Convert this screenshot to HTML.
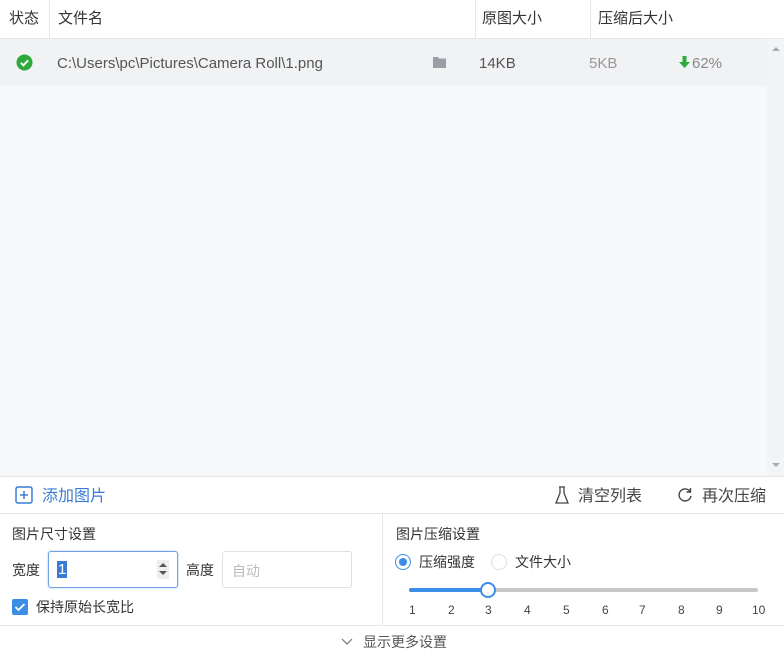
<!DOCTYPE html>
<html><head><meta charset="utf-8"><style>
*{box-sizing:border-box;margin:0;padding:0}
body{width:784px;height:661px;overflow:hidden;background:#fff;font-family:"Liberation Sans","Noto Sans CJK SC",sans-serif;color:#333;position:relative;font-size:14px}
.abs{position:absolute}
.hdr{left:0;top:0;width:784px;height:39px;background:#fff;border-bottom:1px solid #e6e8eb}
.hdr div{position:absolute;top:0;height:38px;line-height:38px;font-size:15px;color:#333;border-right:1px solid #e6e8eb;padding-left:8px}
.list{left:0;top:39px;width:767px;height:437px;background:#f7f8fa}
.row{left:0;top:39px;width:767px;height:47px;background:#f1f2f4}
.sb{left:767px;top:39px;width:17px;height:437px;background:#f3f4f6}
.tb{left:0;top:476px;width:784px;height:38px;background:#fff;border-top:1px solid #e6e8eb;border-bottom:1px solid #e6e8eb}
.blue{color:#3a7bd5}
.input{border:1px solid #dcdfe6;border-radius:3px;background:#fff}
</style></head><body>
<div class="abs hdr">
<div style="left:0;width:50px;padding-left:9px">状态</div>
<div style="left:50px;width:426px">文件名</div>
<div style="left:476px;width:115px;padding-left:6px">原图大小</div>
<div style="left:591px;width:193px;border-right:none;padding-left:7px">压缩后大小</div>
</div>
<div class="abs list"></div>
<div class="abs row"></div>
<div class="abs sb"><div style="position:absolute;left:5px;top:8px;width:0;height:0;border-left:4px solid transparent;border-right:4px solid transparent;border-bottom:4px solid #aaa"></div><div style="position:absolute;left:5px;top:424px;width:0;height:0;border-left:4px solid transparent;border-right:4px solid transparent;border-top:4px solid #aaa"></div></div>
<svg class="abs" style="left:16px;top:54px" width="17" height="17" viewBox="0 0 17 17"><circle cx="8.5" cy="8.5" r="8" fill="#2eaa3c"/><path d="M4.8 8.8l2.6 2.5 4.8-5" stroke="#fff" stroke-width="2" fill="none"/></svg>
<div class="abs" style="left:57px;top:55px;font-size:15px;color:#555">C:\Users\pc\Pictures\Camera Roll\1.png</div>
<svg class="abs" style="left:433px;top:56px" width="13" height="12" viewBox="0 0 13 12"><path d="M0 1h5l1 1.5h7V12H0z" fill="#9a9ea6"/></svg>
<div class="abs" style="left:479px;top:55px;font-size:15px;color:#555">14KB</div>
<div class="abs" style="left:589px;top:55px;font-size:15px;color:#999">5KB</div>
<svg class="abs" style="left:679px;top:56px" width="11" height="12" viewBox="0 0 11 12"><path d="M3.5 0h4v6h3.5L5.5 12 0 6h3.5z" fill="#2eaa3c"/></svg>
<div class="abs" style="left:692px;top:55px;font-size:15px;color:#888">62%</div>
<div class="abs tb"></div>
<svg class="abs" style="left:15px;top:486px" width="18" height="18" viewBox="0 0 18 18"><rect x="1" y="1" width="16" height="16" rx="2" fill="none" stroke="#3a7bd5" stroke-width="1.5"/><path d="M9 5v8M5 9h8" stroke="#3a7bd5" stroke-width="1.5"/></svg>
<div class="abs blue" style="left:42px;top:482px;font-size:16px">添加图片</div>
<svg class="abs" style="left:555px;top:486px" width="14" height="18" viewBox="0 0 14 18"><path d="M4 1h6M5 1v6L1 17h12L9 7V1" fill="none" stroke="#444" stroke-width="1.3"/></svg>
<div class="abs" style="left:578px;top:482px;font-size:16px;color:#444">清空列表</div>
<svg class="abs" style="left:677px;top:487px" width="16" height="16" viewBox="0 0 16 16"><path d="M13 4.5A6 6 0 1 0 14 9" fill="none" stroke="#444" stroke-width="1.4"/><path d="M13.5 1v4h-4" fill="none" stroke="#444" stroke-width="1.4"/></svg>
<div class="abs" style="left:702px;top:482px;font-size:16px;color:#444">再次压缩</div>
<div class="abs" style="left:382px;top:514px;width:1px;height:111px;background:#e6e8eb"></div>
<div class="abs" style="left:0;top:625px;width:784px;height:1px;background:#e6e8eb"></div>
<div class="abs" style="left:12px;top:524px;font-size:14px">图片尺寸设置</div>
<div class="abs" style="left:12px;top:560px;font-size:14px">宽度</div>
<div class="abs input" style="left:48px;top:551px;width:130px;height:37px;border-color:#6fa3e6;box-shadow:0 0 2px #a9c8f0"><span style="position:absolute;left:8px;top:9px;background:#3a7bd5;color:#fff;font-size:15px;line-height:17px;padding:0 1px">1</span><div style="position:absolute;right:8px;top:8px;width:12px;height:19px;background:#eee"><div style="position:absolute;left:2px;top:3px;border-left:4px solid transparent;border-right:4px solid transparent;border-bottom:4px solid #555"></div><div style="position:absolute;left:2px;top:11px;border-left:4px solid transparent;border-right:4px solid transparent;border-top:4px solid #555"></div></div></div>
<div class="abs" style="left:186px;top:560px;font-size:14px">高度</div>
<div class="abs input" style="left:222px;top:551px;width:130px;height:37px"><span style="position:absolute;left:9px;top:9px;color:#bbb;font-size:14px">自动</span></div>
<div class="abs" style="left:12px;top:599px;width:16px;height:16px;background:#3a8ee6;border-radius:2px"><svg width="16" height="16"><path d="M3.5 8l3 3 6-6" stroke="#fff" stroke-width="1.8" fill="none"/></svg></div>
<div class="abs" style="left:36px;top:597px;font-size:14px">保持原始长宽比</div>
<div class="abs" style="left:396px;top:524px;font-size:14px">图片压缩设置</div>
<div class="abs" style="left:395px;top:554px;width:16px;height:16px;border-radius:50%;border:1px solid #3a8ee6;background:#fff"><div style="position:absolute;left:3px;top:3px;width:8px;height:8px;border-radius:50%;background:#3a8ee6"></div></div>
<div class="abs" style="left:419px;top:552px;font-size:14px">压缩强度</div>
<div class="abs" style="left:491px;top:554px;width:16px;height:16px;border-radius:50%;border:1px solid #dcdfe6"></div>
<div class="abs" style="left:515px;top:552px;font-size:14px">文件大小</div>
<div class="abs" style="left:409px;top:588px;width:349px;height:4px;background:#c8c8c8;border-radius:2px"></div>
<div class="abs" style="left:409px;top:588px;width:80px;height:4px;background:#3a8ee6;border-radius:2px"></div>
<div class="abs" style="left:480px;top:582px;width:16px;height:16px;border-radius:50%;border:2px solid #3a8ee6;background:#fff"></div>
<div class="abs" style="left:409px;top:603px;width:360px;font-size:12px;color:#444">
<span style="position:absolute;left:0">1</span><span style="position:absolute;left:39px">2</span><span style="position:absolute;left:76px">3</span><span style="position:absolute;left:115px">4</span><span style="position:absolute;left:154px">5</span><span style="position:absolute;left:193px">6</span><span style="position:absolute;left:230px">7</span><span style="position:absolute;left:269px">8</span><span style="position:absolute;left:307px">9</span><span style="position:absolute;left:343px">10</span></div>
<svg class="abs" style="left:341px;top:638px" width="12" height="8" viewBox="0 0 12 8"><path d="M1 1l5 5 5-5" stroke="#777" stroke-width="1.2" fill="none"/></svg>
<div class="abs" style="left:363px;top:632px;font-size:14px;color:#555">显示更多设置</div>
</body></html>
